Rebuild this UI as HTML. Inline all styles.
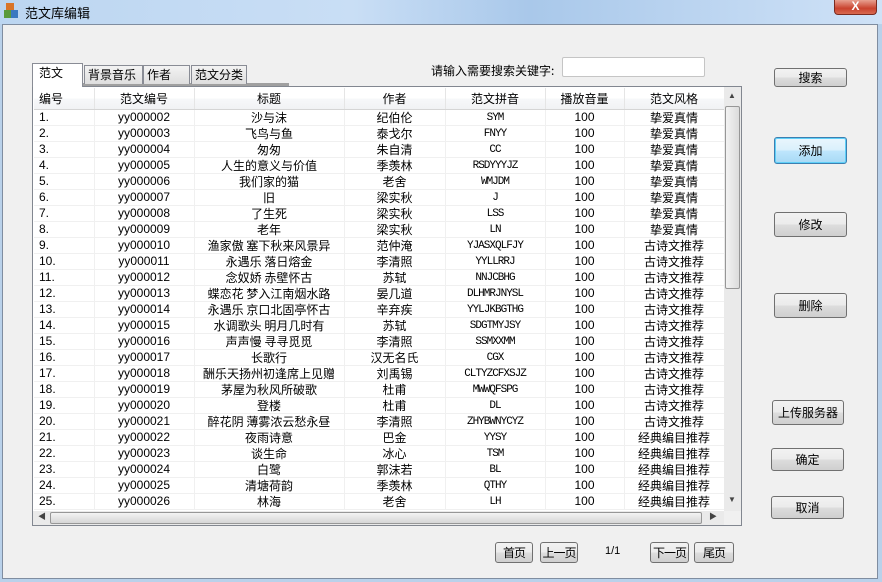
<!DOCTYPE html>
<html><head><meta charset="utf-8"><style>
*{margin:0;padding:0;box-sizing:border-box}
body{width:882px;height:582px;overflow:hidden;background:#b9d1ea;font-family:"Liberation Sans","Noto Sans CJK SC",sans-serif;font-size:12px;color:#000;position:relative}
.abs{position:absolute}
#title{left:0;top:0;width:882px;height:24px;background:linear-gradient(90deg,#bcd6f1,#c9def5 40%,#a9c8ea 60%,#cfe2f7);}
#client{left:2px;top:24px;width:876px;height:555px;background:#f0f0f0;border:1px solid #7f8da0}
.btn{position:absolute;border:1px solid #707070;border-radius:3px;background:linear-gradient(#f2f2f2,#ebebeb 50%,#dddddd 51%,#cfcfcf);text-align:center;font-size:12px;white-space:nowrap;font-family:"Noto Sans CJK SC",sans-serif}
.tab{position:absolute;top:65px;height:19px;border:1px solid #898c95;border-bottom:none;background:linear-gradient(#f3f3f3,#dedede);font-size:12px;white-space:nowrap;overflow:hidden;font-family:"Noto Sans CJK SC",sans-serif;line-height:17px;padding-left:3px}
#grid{left:32px;top:86px;width:710px;height:440px;border:1px solid #828790;background:#fff;overflow:hidden}
table{border-collapse:collapse;position:absolute;left:1px;top:1px;table-layout:fixed;width:690px}
td{height:16px;border-right:1px solid #f0f0f0;border-bottom:1px solid #f0f0f0;text-align:center;font-size:12px;line-height:15px;white-space:nowrap;overflow:hidden;font-family:"Liberation Sans","Noto Sans CJK SC",sans-serif}
tr.h td{height:21px;background:linear-gradient(#fff,#fff 50%,#f7f8fa 51%,#f1f2f4);border-right:1px solid #e5e5e5;border-bottom:1px solid #d5d5d5;font-size:12px;font-family:"Noto Sans CJK SC",sans-serif}
td.l{text-align:left;padding-left:5px}
td.p{font-family:"Liberation Mono",monospace;font-size:11px;letter-spacing:-1px;padding-top:2px;line-height:13px}
td.c{font-family:"Noto Sans CJK SC",sans-serif}
</style></head><body>
<div id="title" class="abs"></div>
<div class="abs" style="left:4px;top:3px;width:14px;height:16px;">
<div class="abs" style="left:2px;top:0;width:8px;height:7px;background:#d9752a"></div>
<div class="abs" style="left:0;top:7px;width:7px;height:8px;background:#5a9a3a"></div>
<div class="abs" style="left:7px;top:7px;width:7px;height:8px;background:#3a78c0"></div></div>
<div class="abs" style="left:25px;top:3px;font-size:13px;font-family:'Noto Sans CJK SC',sans-serif">范文库编辑</div>
<div class="abs" style="left:834px;top:0;width:43px;height:15px;border:1px solid #7a2b20;border-top:none;border-radius:0 0 4px 4px;background:linear-gradient(#e8a090,#c9422e 60%,#d86a50);color:#fff;text-align:center;font-weight:bold;font-size:12px;line-height:13px">X</div>
<div id="client" class="abs"></div>

<div class="abs" style="left:431px;top:62px;font-size:12px;font-family:'Noto Sans CJK SC',sans-serif;white-space:nowrap">请输入需要搜索关键字:</div>
<div class="abs" style="left:562px;top:57px;width:143px;height:20px;border:1px solid #c5c5c5;background:#fff;border-radius:2px"></div>

<div class="abs" style="left:83px;top:83px;width:206px;height:3px;background:#a0a0a0"></div>
<div class="tab" style="left:84px;width:59px">背景音乐</div>
<div class="tab" style="left:143px;width:47px">作者</div>
<div class="tab" style="left:191px;width:56px">范文分类</div>
<div class="tab" style="left:32px;top:63px;width:51px;height:24px;background:#fff;z-index:2;padding-left:6px">范文</div>

<div id="grid" class="abs">
<table>
<colgroup><col style="width:60px"><col style="width:100px"><col style="width:150px"><col style="width:101px"><col style="width:100px"><col style="width:79px"><col style="width:100px"></colgroup>
<tr class="h"><td class="l">编号</td><td>范文编号</td><td>标题</td><td>作者</td><td>范文拼音</td><td>播放音量</td><td>范文风格</td></tr>
<tr><td class="l">1.</td><td>yy000002</td><td class="c">沙与沫</td><td class="c">纪伯伦</td><td class="p">SYM</td><td>100</td><td class="c">挚爱真情</td></tr>
<tr><td class="l">2.</td><td>yy000003</td><td class="c">飞鸟与鱼</td><td class="c">泰戈尔</td><td class="p">FNYY</td><td>100</td><td class="c">挚爱真情</td></tr>
<tr><td class="l">3.</td><td>yy000004</td><td class="c">匆匆</td><td class="c">朱自清</td><td class="p">CC</td><td>100</td><td class="c">挚爱真情</td></tr>
<tr><td class="l">4.</td><td>yy000005</td><td class="c">人生的意义与价值</td><td class="c">季羡林</td><td class="p">RSDYYYJZ</td><td>100</td><td class="c">挚爱真情</td></tr>
<tr><td class="l">5.</td><td>yy000006</td><td class="c">我们家的猫</td><td class="c">老舍</td><td class="p">WMJDM</td><td>100</td><td class="c">挚爱真情</td></tr>
<tr><td class="l">6.</td><td>yy000007</td><td class="c">旧</td><td class="c">梁实秋</td><td class="p">J</td><td>100</td><td class="c">挚爱真情</td></tr>
<tr><td class="l">7.</td><td>yy000008</td><td class="c">了生死</td><td class="c">梁实秋</td><td class="p">LSS</td><td>100</td><td class="c">挚爱真情</td></tr>
<tr><td class="l">8.</td><td>yy000009</td><td class="c">老年</td><td class="c">梁实秋</td><td class="p">LN</td><td>100</td><td class="c">挚爱真情</td></tr>
<tr><td class="l">9.</td><td>yy000010</td><td class="c">渔家傲 塞下秋来风景异</td><td class="c">范仲淹</td><td class="p">YJASXQLFJY</td><td>100</td><td class="c">古诗文推荐</td></tr>
<tr><td class="l">10.</td><td>yy000011</td><td class="c">永遇乐 落日熔金</td><td class="c">李清照</td><td class="p">YYLLRRJ</td><td>100</td><td class="c">古诗文推荐</td></tr>
<tr><td class="l">11.</td><td>yy000012</td><td class="c">念奴娇 赤壁怀古</td><td class="c">苏轼</td><td class="p">NNJCBHG</td><td>100</td><td class="c">古诗文推荐</td></tr>
<tr><td class="l">12.</td><td>yy000013</td><td class="c">蝶恋花 梦入江南烟水路</td><td class="c">晏几道</td><td class="p">DLHMRJNYSL</td><td>100</td><td class="c">古诗文推荐</td></tr>
<tr><td class="l">13.</td><td>yy000014</td><td class="c">永遇乐 京口北固亭怀古</td><td class="c">辛弃疾</td><td class="p">YYLJKBGTHG</td><td>100</td><td class="c">古诗文推荐</td></tr>
<tr><td class="l">14.</td><td>yy000015</td><td class="c">水调歌头 明月几时有</td><td class="c">苏轼</td><td class="p">SDGTMYJSY</td><td>100</td><td class="c">古诗文推荐</td></tr>
<tr><td class="l">15.</td><td>yy000016</td><td class="c">声声慢 寻寻觅觅</td><td class="c">李清照</td><td class="p">SSMXXMM</td><td>100</td><td class="c">古诗文推荐</td></tr>
<tr><td class="l">16.</td><td>yy000017</td><td class="c">长歌行</td><td class="c">汉无名氏</td><td class="p">CGX</td><td>100</td><td class="c">古诗文推荐</td></tr>
<tr><td class="l">17.</td><td>yy000018</td><td class="c">酬乐天扬州初逢席上见赠</td><td class="c">刘禹锡</td><td class="p">CLTYZCFXSJZ</td><td>100</td><td class="c">古诗文推荐</td></tr>
<tr><td class="l">18.</td><td>yy000019</td><td class="c">茅屋为秋风所破歌</td><td class="c">杜甫</td><td class="p">MWWQFSPG</td><td>100</td><td class="c">古诗文推荐</td></tr>
<tr><td class="l">19.</td><td>yy000020</td><td class="c">登楼</td><td class="c">杜甫</td><td class="p">DL</td><td>100</td><td class="c">古诗文推荐</td></tr>
<tr><td class="l">20.</td><td>yy000021</td><td class="c">醉花阴 薄雾浓云愁永昼</td><td class="c">李清照</td><td class="p">ZHYBWNYCYZ</td><td>100</td><td class="c">古诗文推荐</td></tr>
<tr><td class="l">21.</td><td>yy000022</td><td class="c">夜雨诗意</td><td class="c">巴金</td><td class="p">YYSY</td><td>100</td><td class="c">经典编目推荐</td></tr>
<tr><td class="l">22.</td><td>yy000023</td><td class="c">谈生命</td><td class="c">冰心</td><td class="p">TSM</td><td>100</td><td class="c">经典编目推荐</td></tr>
<tr><td class="l">23.</td><td>yy000024</td><td class="c">白鹭</td><td class="c">郭沫若</td><td class="p">BL</td><td>100</td><td class="c">经典编目推荐</td></tr>
<tr><td class="l">24.</td><td>yy000025</td><td class="c">清塘荷韵</td><td class="c">季羡林</td><td class="p">QTHY</td><td>100</td><td class="c">经典编目推荐</td></tr>
<tr><td class="l">25.</td><td>yy000026</td><td class="c">林海</td><td class="c">老舍</td><td class="p">LH</td><td>100</td><td class="c">经典编目推荐</td></tr>
</table>
<div class="abs" style="left:691px;top:0;width:17px;height:424px;background:#eaeaea"></div>
<div class="abs" style="left:695px;top:4px;font-size:8px;color:#444">▲</div>
<div class="abs" style="left:695px;top:408px;font-size:8px;color:#444">▼</div>
<div class="abs" style="left:692px;top:19px;width:15px;height:183px;border:1px solid #979797;border-radius:2px;background:linear-gradient(90deg,#f3f3f3,#dcdcdc)"></div>
<div class="abs" style="left:0;top:424px;width:691px;height:14px;background:#eaeaea"></div>
<div class="abs" style="left:17px;top:425px;width:652px;height:12px;border:1px solid #979797;border-radius:2px;background:linear-gradient(#f3f3f3,#d6d6d6)"></div>
<div class="abs" style="left:5px;top:424px;font-size:8px;color:#444">◀</div>
<div class="abs" style="left:676px;top:424px;font-size:8px;color:#444">▶</div>
<div class="abs" style="left:691px;top:424px;width:17px;height:14px;background:#f0f0f0"></div>
</div>

<div class="btn" style="left:774px;top:68px;width:73px;height:19px;line-height:17px">搜索</div>
<div class="btn" style="left:774px;top:137px;width:73px;height:27px;line-height:25px;border:1px solid #3c7fb1;background:linear-gradient(#eaf6fd,#d9f0fc 50%,#bee6fd 51%,#a7d9f5);box-shadow:inset 0 0 0 1px #5fd0f8">添加</div>
<div class="btn" style="left:774px;top:212px;width:73px;height:25px;line-height:23px">修改</div>
<div class="btn" style="left:774px;top:293px;width:73px;height:25px;line-height:23px">删除</div>
<div class="btn" style="left:772px;top:400px;width:72px;height:25px;line-height:23px">上传服务器</div>
<div class="btn" style="left:771px;top:448px;width:73px;height:23px;line-height:21px">确定</div>
<div class="btn" style="left:771px;top:496px;width:73px;height:23px;line-height:21px">取消</div>

<div class="btn" style="left:495px;top:542px;width:38px;height:21px;line-height:19px;letter-spacing:-1px">首页</div>
<div class="btn" style="left:540px;top:542px;width:38px;height:21px;line-height:19px;letter-spacing:-1px">上一页</div>
<div class="abs" style="left:605px;top:545px;font-size:11px">1/1</div>
<div class="btn" style="left:650px;top:542px;width:39px;height:21px;line-height:19px;letter-spacing:-1px">下一页</div>
<div class="btn" style="left:694px;top:542px;width:40px;height:21px;line-height:19px;letter-spacing:-1px">尾页</div>
</body></html>
